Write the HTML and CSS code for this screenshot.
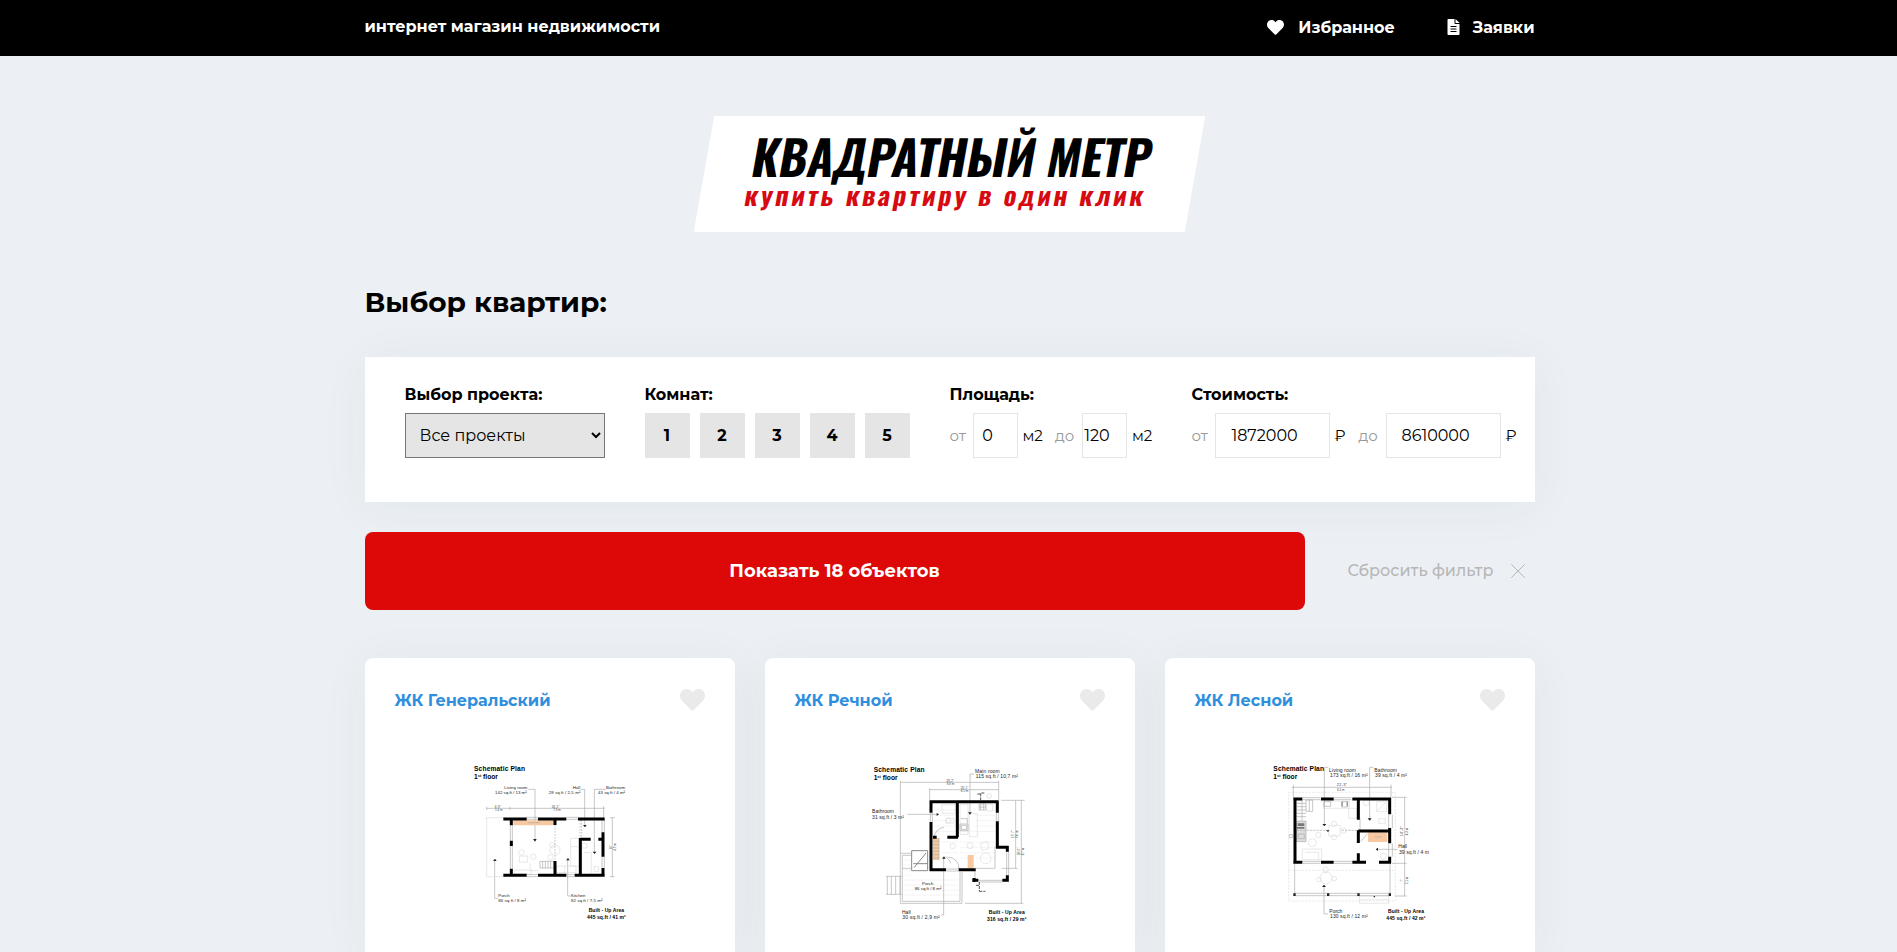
FILE: index.html
```html
<!DOCTYPE html>
<html lang="ru">
<head>
<meta charset="utf-8">
<title>Квадратный метр</title>
<link rel="stylesheet" href="styles.css">
</head>
<body>
<header class="header">
  <div class="container header-row">
    <span class="slogan">интернет магазин недвижимости</span>
    <nav class="nav">
      <a class="nav-link" href="#"><svg class="nav-heart" viewBox="0 0 512 512"><path d="M462 62c-54-46-136-38-186 14l-20 21-20-21C186 24 104 16 50 62-13 115-16 211 40 269l193 199c12 13 33 13 45 0l193-199c56-58 53-154-9-207z"/></svg>Избранное</a>
      <a class="nav-link nav-orders" href="#"><svg class="nav-doc" viewBox="0 0 384 512"><path fill-rule="evenodd" d="M224 136V0H24C11 0 0 11 0 24v464c0 13 11 24 24 24h336c13 0 24-11 24-24V160H248c-13 0-24-11-24-24zM96 224h192v32H96zM96 304h192v32H96zM96 384h192v32H96zM384 128H256V0l128 122z"/></svg>Заявки</a>
    </nav>
  </div>
</header>
<main class="container">
  <div class="logo">
    <div class="logo-title">Квадратный метр</div>
    <div class="logo-sub">купить квартиру в один клик</div>
  </div>
  <h1 class="heading">Выбор квартир:</h1>
  <form class="filter">
    <div class="group">
      <div class="label">Выбор проекта:</div>
      <select class="select"><option>Все проекты</option></select>
    </div>
    <div class="group">
      <div class="label">Комнат:</div>
      <div class="rooms"><span class="room">1</span><span class="room">2</span><span class="room">3</span><span class="room">4</span><span class="room">5</span></div>
    </div>
    <div class="group group-area">
      <div class="label">Площадь:</div>
      <div class="range"><span class="hint">от</span><input class="num" type="number" value="0"><span class="unit">м2</span><span class="hint hint-to">до</span><input class="num" type="number" value="120"><span class="unit">м2</span></div>
    </div>
    <div class="group">
      <div class="label">Стоимость:</div>
      <div class="range"><span class="hint">от</span><input class="num num-wide" type="number" value="1872000"><span class="unit unit-rub">₽</span><span class="hint hint-to">до</span><input class="num num-wide" type="number" value="8610000"><span class="unit unit-rub">₽</span></div>
    </div>
  </form>
  <div class="actions">
    <button class="show" type="button">Показать 18 объектов</button>
    <button class="reset" type="button">Сбросить фильтр<svg class="cross" viewBox="0 0 14 14"><path d="M.3.3l13.4 13.4M13.7.3L.3 13.7"/></svg></button>
  </div>
  <section class="cards">
    <article class="card">
      <div class="card-head"><a class="card-title" href="#">ЖК Генеральский</a><svg class="like" viewBox="0 0 512 448"><path d="M462 30c-54-46-136-38-186 14l-20 21-20-21C186-8 104-16 50 30-13 83-16 179 40 237l193 199c12 13 33 13 45 0l193-199c56-58 53-154-9-207z"/></svg></div>
      <svg class="plan" viewBox="-30 0 600 606">
        <g class="thin"><path d="M80 175H434M80 170v10M150 170v10M431 168v42M457 203V380M450 203h14M450 380h14M225 270V118h-20M374 228V118h-12M403 308V118h35M104 332V445h10M323 330V438h10"/></g>
        <g class="faint"><path d="M80 203V380H130M80 203h50M178 318h25v18h-25zM163 360h52v12h-52zM210 340v22h25M332 265h26v84h-26zM332 290h26M366 280h14v14h-14zM372 308h22v62M290 348h58v20h-58zM314 348v20M402 350h14v14h-14z"/><circle cx="285" cy="300" r="15"/><circle cx="184" cy="307" r="8"/><circle cx="220" cy="320" r="8"/><circle cx="277" cy="285" r="8"/><circle cx="271" cy="322" r="8"/></g>
        <path class="wood" d="M160 211H282v15H160z"/>
        <g class="thin"><path d="M240 334h42v20h-42zM248 334v20M256 334v20M264 334v20M272 334v20M151 226v46M157 226v46M151 288v68M157 288v68M198 202h36M198 208h36M320 202h34M320 208h34M200 374h34M200 380h34M319 374h25M319 380h25M426 210v37M433 210v37M426 320v34M433 320v34M205 218h34"/><path stroke-dasharray="5 4" d="M285 225v108M360 210v55M365 210v55"/></g>
        <path class="wall" stroke-width="9" d="M130 207h70M234 207h85M354 207h80M130 376h70M234 376h85M344 376h90M154 207v19M154 272v16M154 356v20M285 207v18M285 333v43M361 264v112M361 268h31M415 268h17M429 247v73M429 354v24"/>
        <g class="dot"><path d="M219 267h11l-5 8zM369 225h11l-5 7zM398 305h11l-5 7zM99 333h11l-5-7zM318 331h11l-5-7z"/></g>
        <g class="bold"><text x="42" y="62" font-size="20" textLength="153">Schematic Plan</text><text x="42" y="87" font-size="20">1<tspan font-size="12" dy="-6">st</tspan><tspan dy="6"> floor</tspan></text><text x="386" y="487" font-size="15" textLength="106">Built - Up Area</text><text x="381" y="506" font-size="15" textLength="116">445 sq.ft / 41 m²</text></g>
        <g class="note"><text x="133" y="116" textLength="69">Living room</text><text x="105" y="131" textLength="95">142 sq.ft / 13 m²</text><text x="338" y="116">Hall</text><text x="266" y="131" textLength="95">28 sq.ft / 2,5 m²</text><text x="438" y="116" textLength="57">Bathroom</text><text x="414" y="131" textLength="81">43 sq.ft / 4 m²</text><text x="115" y="442">Porch</text><text x="115" y="457" textLength="83">86 sq.ft / 8 m²</text><text x="333" y="442">Kitchen</text><text x="333" y="457" textLength="94">82 sq.ft / 7,5 m²</text></g>
        <g class="tiny"><text x="104" y="173">6'-9"</text><text x="105" y="184">1,6 m</text><text x="275" y="173">26'-1"</text><text x="280" y="184">7,9 m</text><text transform="translate(455 298)rotate(-90)">16'</text><text transform="translate(467 302)rotate(-90)">4,9 m</text></g>
      </svg>
    </article>
    <article class="card">
      <div class="card-head"><a class="card-title" href="#">ЖК Речной</a><svg class="like" viewBox="0 0 512 448"><path d="M462 30c-54-46-136-38-186 14l-20 21-20-21C186-8 104-16 50 30-13 83-16 179 40 237l193 199c12 13 33 13 45 0l193-199c56-58 53-154-9-207z"/></svg></div>
      <svg class="plan" viewBox="-30 0 600 606">
        <g class="boards"><path d="M222 180h65M222 196h65M222 212h65M222 228h65M222 244h65M300 276h105M300 292h105M300 308h105M300 324h105M245 276h50M245 308h50M300 244h105M345 212h60M345 196h60M345 228h60M130 390h165M130 405h165M130 420h165M130 435h165M130 330h24M130 345h24M130 360h24M130 375h24"/></g>
        <g class="faint"><path d="M246 164h40v26h-40zM300 163h24v90h-24zM328 190h24v70h-24zM380 163h18v20h-18zM258 205h24v14h-24zM362 280l20-5 4 20-20 6z"/><circle cx="377" cy="325" r="16"/><circle cx="265" cy="212" r="8"/><circle cx="278" cy="288" r="8"/><circle cx="330" cy="287" r="9"/><circle cx="388" cy="138" r="7"/></g>
        <path class="wood" d="M219 264h18v66h-18zM323 315h18v40h-18z"/>
        <g class="thin"><path d="M121 97H416M209 119H416M121 92V310M209 114v36M416 92v58M424 151h70M467 151V355M484 151V460M315 460h175M425 355h48M121 310h33M121 310V460H306V366M127 316V454H300V366M127 316h27M127 355h27M232 193H142M330 188V72h12M251 325V495h-8M78 379h48M78 433h48M82 379v54M94 379v54M107 379v54M120 379v54M237 264v66M219 274h18M219 284h18M219 294h18M219 304h18M219 314h18M219 324h18M211 188v28M217 188v28M409 188v26M415 188v26M258 357h38M258 363h38M355 391h72M355 396h72M440 304v72M446 304v72M345 356v30M405 290v65H345M300 222h24v20h-24zM304 226h16v12h-16zM302 206h20v14M272 340a34 34 0 0 0-15-20M297 357a34 34 0 0 0-34-36M222 262a34 34 0 0 1 30-30M357 162h20v18h-20zM362 162v18M371 162v18M357 171h20"/></g>
        <path class="gray" d="M155 302h48v60h-48zM162 353l36-44M160 341h42"/>
        <path class="wall" stroke-width="9" d="M209 155H416M213 151v37M213 216v147M209 359h49M296 359h51M292 155v107M219 262h11M262 262h32M412 155v33M412 214v80M408 292h38M442 288v17M442 376v19M427 391h19M337 391h18M342 384v12"/>
        <path class="dash" d="M362 151v-22h14M352 132h10M358 396v28M358 424h18M348 406h10"/>
        <g class="dot"><path d="M230 189v9l7-5zM324 187h11l-5 7zM246 326h11l-5-7z"/></g>
        <g class="bold"><text x="41" y="65" font-size="20" textLength="153">Schematic Plan</text><text x="41" y="90" font-size="20">1<tspan font-size="12" dy="-6">st</tspan><tspan dy="6"> floor</tspan></text><text x="386" y="493" font-size="15" textLength="108">Built - Up Area</text><text x="381" y="512" font-size="15" textLength="118">316 sq.ft / 29 m²</text></g>
        <g class="note big"><text x="345" y="68" textLength="74">Main room</text><text x="347" y="84" textLength="127">115 sq.ft / 10,7 m²</text><text x="36" y="189" textLength="66">Bathroom</text><text x="36" y="206" textLength="96">31 sq.ft / 3 m²</text><text x="126" y="491">Hall</text><text x="127" y="508" textLength="112">30 sq.ft / 2,9 m²</text></g>
        <g class="note"><text x="186" y="404">Porch</text><text x="164" y="419" textLength="80">86 sq.ft / 8 m²</text></g>
        <g class="tiny"><text x="259" y="95">28'-2"</text><text x="260" y="105">8,6 m</text><text x="302" y="116">20'-1"</text><text x="302" y="126">6,1 m</text><text transform="translate(462 264)rotate(-90)">19'-7"</text><text transform="translate(473 264)rotate(-90)">6,0 m</text><text transform="translate(481 316)rotate(-90)">28'-6"</text><text transform="translate(491 316)rotate(-90)">8,7 m</text></g>
      </svg>
    </article>
    <article class="card">
      <div class="card-head"><a class="card-title" href="#">ЖК Лесной</a><svg class="like" viewBox="0 0 512 448"><path d="M462 30c-54-46-136-38-186 14l-20 21-20-21C186-8 104-16 50 30-13 83-16 179 40 237l193 199c12 13 33 13 45 0l193-199c56-58 53-154-9-207z"/></svg></div>
      <svg class="plan" viewBox="-30 0 600 606">
        <g class="faint"><path stroke-dasharray="6 4" d="M86 127H406V453H86zM86 361H406"/><path d="M190 153h78v22h-78zM266 175h24v30h-24zM350 155h30v30h-30zM350 185l30-30M127 297h58v32h-58zM136 307h40v22M356 206h20v14h-20zM206 226h34v32h-34zM298 438h88v22h-88zM298 449h88"/><circle cx="319" cy="158" r="9"/><circle cx="157" cy="278" r="12"/><circle cx="175" cy="255" r="8"/><circle cx="222" cy="222" r="8"/><circle cx="222" cy="262" r="8"/><circle cx="250" cy="242" r="8"/><circle cx="370" cy="318" r="9"/><circle cx="198" cy="384" r="18"/><circle cx="197" cy="359" r="8"/><circle cx="177" cy="388" r="7"/><circle cx="223" cy="386" r="7"/></g>
        <path class="wood" d="M324 247h58v29h-58z"/>
        <g class="thin"><path d="M95 112H396M100 104v38M393 104v38M434 142V438M396 142h44M396 340h44M406 438h34M193 225V52h12M329 208V52h12M350 298h62M192 408V492h12M104 340v95M390 340v92M103 430H390M103 437H390M128 143h54M128 149h54M220 143h54M220 149h54M128 334h54M128 340h54M222 334h54M222 340h54M386 194v40M397 194v40M386 280v40M397 280v40M300 205v40M110 160h28M110 170h28M110 180h28M110 190h28M110 200h28M126 150v62M138 150h20v34h-20zM148 150v34M302 275l20-24M345 261h20M192 155h20v14h-20zM245 155h18v16h-18z"/><path d="M110 213h28v62h-28z" fill="#ddd"/><path d="M88 254h9v9h-9zM115 252h18v14h-18z"/><path stroke-dasharray="7 3" d="M110 241h95M245 241h52"/></g>
        <path class="stove" d="M113 220h20v8h-20zM111 231h22v5h-22zM245 155h3v14h-3zM260 155h3v14h-3z"/>
        <path class="wall" stroke-width="9" d="M100 147h27M183 147h38M277 147h116M105 143v197M100 337h27M183 337h38M277 337h41M357 337h36M295 147v62M295 241v38M295 310v27M295 243h95M389 143v50M389 234v46M389 320v20"/>
        <g class="dot"><path d="M187 222h12l-6 7zM323 205h12l-6 7zM354 293v10l-7-5zM186 411h12l-6-7zM198 241h11l-5 5zM100 430h7v8h-7zM201 430h7v8h-7zM292 430h7v8h-7zM386 430h7v8h-7zM341 438h4v4h-4z"/></g>
        <g class="bold"><text x="40" y="62" font-size="20" textLength="152">Schematic Plan</text><text x="40" y="87" font-size="20">1<tspan font-size="12" dy="-6">st</tspan><tspan dy="6"> floor</tspan></text><text x="384" y="490" font-size="15" textLength="108">Built - Up Area</text><text x="379" y="509" font-size="15" textLength="117">445 sq.ft / 42 m²</text></g>
        <g class="note big"><text x="207" y="65" textLength="81">Living room</text><text x="210" y="82" textLength="113">173 sq.ft / 16 m²</text><text x="343" y="65" textLength="68">Bathroom</text><text x="345" y="82" textLength="96">39 sq.ft / 4 m²</text><text x="415" y="293">Hall</text><text x="417" y="312" textLength="90">39 sq.ft / 4 m</text><text x="208" y="488">Porch</text><text x="210" y="505" textLength="113">130 sq.ft / 12 m²</text></g>
        <g class="tiny"><text x="230" y="109" font-size="12">21'-3"</text><text x="231" y="124">6,5 m</text><text font-size="12" transform="translate(430 259)rotate(-90)">14'-2"</text><text transform="translate(443 256)rotate(-90)">4,3 m</text><text transform="translate(430 395)rotate(-90)">7'</text><text transform="translate(443 403)rotate(-90)">2,1 m</text></g>
      </svg>
    </article>
  </section>
</main>
</body>
</html>
```
FILE: styles.css
```css
* { box-sizing: border-box; }
html { overflow: hidden; }
body {
  margin: 0;
  height: 952px;
  overflow: hidden;
  background: #ecf0f5;
  color: #000;
  font: 400 16px/20px "Montserrat", "Inter", sans-serif;
}
a { color: inherit; text-decoration: none; }
.container { width: 1172px; margin: 0 auto; padding-left: 2px; }
.header { background: #000; color: #fff; font-weight: 700; }
.header-row { display: flex; justify-content: space-between; align-items: flex-start; height: 56px; padding-top: 17px; }
.nav { display: flex; padding-top: 1px; }
.nav-link { display: flex; align-items: center; }
.nav-link svg { position: relative; top: -1px; fill: #fff; }
.nav-heart { width: 17px; height: 17px; margin-right: 14px; }
.nav-orders { margin-left: 52px; }
.nav-doc { width: 13px; height: 16px; margin-right: 13px; }
.logo {
  width: 491px;
  height: 116px;
  margin: 60px auto 0;
  padding-top: 4px;
  background: #fff;
  transform: skewX(-10deg);
  font-family: "Oswald", "Roboto", sans-serif;
  font-weight: 700;
  text-align: center;
  white-space: nowrap;
}
.logo-title { font-size: 48px; line-height: 72px; text-transform: uppercase; }
.logo-sub { margin-top: -16px; font-size: 26px; line-height: 38px; letter-spacing: 2.85px; color: #d60a10; }
.heading { margin: 53px 0 38px; font-size: 28px; line-height: 34px; font-weight: 700; }
.filter {
  display: flex;
  gap: 40px;
  height: 145px;
  padding: 28px 18px 44px 40px;
  background: #fff;
  box-shadow: 0 5px 50px rgba(0, 60, 60, .05);
}
.label { margin-bottom: 8px; font-weight: 700; }
.group-area { width: 202px; }
.select {
  display: block;
  width: 200px;
  height: 45px;
  padding: 0 0 0 10px;
  border: 1px solid #767676;
  border-radius: 0;
  background: #e5e5e5;
  color: #000;
  font: inherit;
}
.rooms { display: flex; gap: 10px; }
.room { width: 45px; height: 45px; background: #e5e5e5; font-weight: 700; line-height: 45px; text-align: center; }
.range { display: flex; align-items: center; }
.hint { width: 16px; margin-right: 7px; color: #999; font-size: 15px; white-space: nowrap; }
.hint-to { width: 19px; margin-right: 8px; }
.num {
  width: 45px;
  height: 45px;
  padding: 0;
  border: 1px solid #e5e5e5;
  background: #fff;
  color: #000;
  font: inherit;
  text-align: center;
}
.num-wide { width: 115px; }
.unit { width: 21px; margin: 0 12px 0 5px; font-size: 15px; }
.unit-rub { width: 12px; }
.actions { display: flex; margin: 30px 0 48px; }
.show {
  width: 940px;
  height: 78px;
  padding: 0;
  border: 0;
  border-radius: 8px;
  background: #dd0808;
  color: #fff;
  font: 700 18px/22px "Montserrat", sans-serif;
}
.reset {
  display: flex;
  align-items: center;
  margin-left: 43px;
  padding: 0;
  border: 0;
  background: none;
  color: #b7b7b7;
  font: 500 16px/20px "Montserrat", sans-serif;
}
.cross { width: 14px; height: 14px; margin-left: 18px; fill: none; stroke: #b7b7b7; }
.cards { display: grid; grid-template-columns: repeat(3, 370px); gap: 30px; }
.card {
  height: 294px;
  padding: 30px 30px 0;
  border-radius: 8px 8px 0 0;
  background: #fff;
  box-shadow: 0 5px 50px rgba(0, 60, 60, .05);
}
.card-head { display: flex; justify-content: space-between; align-items: flex-start; height: 62px; }
.card-title { padding-top: 3px; color: #2f8fdd; font-weight: 700; }
.like { width: 25px; height: 22px; margin-top: 1px; fill: #eaeaea; }
.plan { display: block; width: 200px; height: 202px; margin: 0 auto; font-family: "Liberation Sans", Arial, sans-serif; }
.thin { fill: none; stroke: #aaa; stroke-width: 2; }
.faint { fill: none; stroke: #ddd; stroke-width: 2; }
.boards { fill: none; stroke: #eee; stroke-width: 2; }
.gray { fill: none; stroke: #888; stroke-width: 3; }
.dash { fill: none; stroke: #333; stroke-width: 2.5; stroke-dasharray: 9 3; }
.wood { fill: #f8c9a0; }
.wall { fill: none; stroke: #000; }
.dot { fill: #222; }
.stove { fill: #777; }
.bold { font-weight: 700; fill: #000; }
.note { font-size: 13px; fill: #222; }
.big { font-size: 15px; }
.tiny { font-size: 9px; fill: #444; }
```
